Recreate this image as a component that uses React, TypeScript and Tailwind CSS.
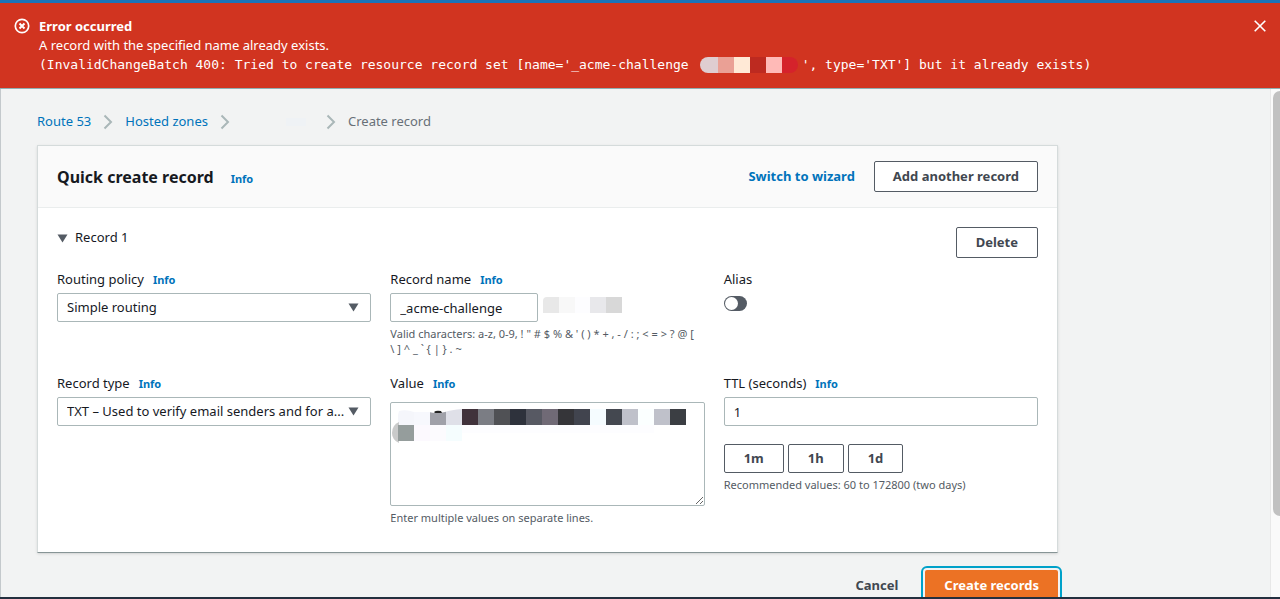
import type { ReactNode } from "react";

const RING =
  "rounded-[2px] border border-[#545b64] bg-white text-[13px] font-bold text-[#414750]";
const FIELD =
  "h-[29px] w-full rounded-[2px] border border-[#aab7b8] bg-white px-[9px] text-[13px] text-[#16191f] outline-none";
const HINT = "text-[11px] leading-[15px] text-[#545b64]";

function Info() {
  return (
    <a href="#info" className="text-[11px] font-bold text-[#0073bb]">
      Info
    </a>
  );
}

function FieldLabel({ htmlFor, info = true, children }: { htmlFor: string; info?: boolean; children: ReactNode }) {
  return (
    <div className="flex h-5 items-center gap-[9px] text-[13px] text-[#16191f]">
      <label htmlFor={htmlFor}>{children}</label>
      {info && <Info />}
    </div>
  );
}

function SelectField({ id, value }: { id: string; value: string }) {
  return (
    <div className="relative mt-[3px]">
      <select id={id} className={`${FIELD} appearance-none truncate pr-6`}>
        <option>{value}</option>
      </select>
      <svg className="pointer-events-none absolute top-[10px] right-3 h-[9px] w-[11px]" viewBox="0 0 11 9">
        <path d="M0.5 0.5H10.5L5.5 8.5Z" fill="#545b64" />
      </svg>
    </div>
  );
}

function Separator() {
  return (
    <svg className="h-4 w-[10px]" viewBox="0 0 10 16" fill="none" stroke="#aab7b8" strokeWidth="2">
      <path d="M1.5 1.5L8 8L1.5 14.5" />
    </svg>
  );
}

function ValueMask() {
  const first = [
    "#f5f6fb", "#f7f8fd", "#a0a1a9", "#dfe0e8", "#40323b", "#7b7d84", "#505155", "#2e323c",
    "#575963", "#706a76", "#353539", "#41444e", "#f5fcff", "#444850", "#bfc1ca", "#fbffff", "#bfc1ca", "#3b3e43",
  ];
  const second = ["#959d9c", "#fcf9fe", "#fcfbfe", "#f5fdfe"];
  return (
    <svg className="pointer-events-none absolute top-[6px] left-[1px] h-[38px] w-[298px]" viewBox="0 0 298 38">
      {first.map((fill, i) => (
        <rect key={i} x={7 + i * 16} y="1" width="16" height="16" fill={fill} />
      ))}
      <path d="M7 1H71Q60 2 54 4Q45 6 38 4H23Q15 1 8 3L7 7Z" fill="#fff" />
      <path d="M43 4Q45 2 50 3L51 5H44Z" fill="#222" />
      <path d="M8 14Q1 17 1 25Q1 32 8 35Z" fill="#c9caca" />
      {second.map((fill, i) => (
        <rect key={i} x={7 + i * 16} y="17" width="16" height="16" fill={fill} />
      ))}
      <rect x="71" y="17" width="192" height="8" fill="#fdfdff" />
    </svg>
  );
}

export default function App() {
  return (
    <div className="flex h-screen flex-col overflow-hidden border-b-2 border-[#232f3e] bg-[#f2f3f3] font-['Noto_Sans',sans-serif] text-[13px] text-[#16191f]">
      <div className="h-[3px] shrink-0 bg-[#1a73ba]" />
      <div
        role="alert"
        className="flex shrink-0 items-start gap-[9px] border-b border-[#8fb0b3] bg-[#d13420] p-[14px] text-white"
      >
        <svg className="mt-px h-4 w-4 shrink-0" viewBox="0 0 16 16" fill="none" stroke="currentColor" strokeWidth="2">
          <circle cx="8" cy="8" r="6.7" strokeWidth="1.7" />
          <path d="M5.5 5.5L10.5 10.5M10.5 5.5L5.5 10.5" />
        </svg>
        <div className="min-w-0 flex-1 leading-[19px]">
          <p className="font-bold">Error occurred</p>
          <p>A record with the specified name already exists.</p>
          <p className="flex items-center font-['DejaVu_Sans_Mono',monospace] whitespace-pre">
            <span>(InvalidChangeBatch 400: Tried to create resource record set [name=&#39;_acme-challenge</span>
            <span className="mr-1 ml-[11px] flex h-4 overflow-hidden rounded-lg">
              <span className="w-[18px] bg-[#dfcdd1]" />
              <span className="w-4 bg-[#eaa095]" />
              <span className="w-4 bg-[#ffe9d6]" />
              <span className="w-4 bg-[#bd2a20]" />
              <span className="w-4 bg-[#ffbab7]" />
              <span className="w-4 bg-[#d5222b]" />
            </span>
            <span>&#39;, type=&#39;TXT&#39;] but it already exists)</span>
          </p>
        </div>
        <button aria-label="Dismiss" className="mt-[3px] h-3 w-3">
          <svg className="h-3 w-3" viewBox="0 0 12 12" fill="none" stroke="currentColor" strokeWidth="1.6">
            <path d="M0.7 0.7L11.3 11.3M11.3 0.7L0.7 11.3" />
          </svg>
        </button>
      </div>

      <div className="flex min-h-0 flex-1 border-l border-[#c4c9cc]">
        <main className="min-w-0 flex-1 overflow-hidden pt-[23px] pr-9 pl-9">
          <nav aria-label="Breadcrumb" className="flex h-5 items-center gap-3">
            <a href="#route53" className="text-[#0073bb]">Route 53</a>
            <Separator />
            <a href="#zones" className="text-[#0073bb]">Hosted zones</a>
            <Separator />
            <span className="flex w-[72px] justify-end pr-2">
              <span className="h-2 w-5 bg-[#eff2f5]" />
            </span>
            <Separator />
            <span className="text-[#687078]">Create record</span>
          </nav>

          <section className="mt-[13px] max-w-[1021px] border border-[#d5dbdb] border-b-[#879596] bg-white shadow-sm">
            <header className="flex h-[62px] items-center justify-between border-b border-[#eaeded] bg-[#fafafa] px-[19px]">
              <div className="flex items-baseline gap-[17px]">
                <h1 className="text-base font-bold">Quick create record</h1>
                <Info />
              </div>
              <div className="flex items-center gap-[19px]">
                <a href="#wizard" className="text-[13px] font-bold text-[#0073bb]">Switch to wizard</a>
                <button className={`${RING} h-[31px] px-[18px]`}>Add another record</button>
              </div>
            </header>

            <div className="px-[19px] pt-[19px] pb-[27px]">
              <div className="flex items-start justify-between">
                <button aria-expanded="true" className="flex h-[22px] items-center gap-[7px]">
                  <svg className="h-[9px] w-[11px]" viewBox="0 0 11 9">
                    <path d="M0.5 0.5H10.5L5.5 8.5Z" fill="#545b64" />
                  </svg>
                  Record 1
                </button>
                <button className={`${RING} h-[31px] px-[19px]`}>Delete</button>
              </div>

              <div className="mt-3 grid grid-cols-3 gap-x-[19px] gap-y-[18px]">
                <div>
                  <FieldLabel htmlFor="policy">Routing policy</FieldLabel>
                  <SelectField id="policy" value="Simple routing" />
                </div>
                <div>
                  <FieldLabel htmlFor="name">Record name</FieldLabel>
                  <div className="mt-[3px] flex items-center gap-[5px]">
                    <div className="w-[148px]">
                      <input id="name" className={FIELD} defaultValue="_acme-challenge" />
                    </div>
                    <div className="mb-[6px] flex h-4 overflow-hidden rounded-tl">
                      <span className="w-4 bg-[#e8e8e8]" />
                      <span className="w-4 bg-[#f8f8f8]" />
                      <span className="w-[15px] bg-[#fdfdff]" />
                      <span className="w-4 bg-[#e8e8eb]" />
                      <span className="w-4 bg-[#d8d8d8]" />
                    </div>
                  </div>
                  <p className={`${HINT} mt-1`}>
                    Valid characters: a-z, 0-9, ! &quot; # $ % &amp; &#39; ( ) * + , - / : ; &lt; = &gt; ? @ [
                    <br />
                    {"\\ ] ^ _ ` { | } . ~"}
                  </p>
                </div>
                <div>
                  <FieldLabel htmlFor="alias" info={false}>Alias</FieldLabel>
                  <input
                    id="alias"
                    type="checkbox"
                    role="switch"
                    className="mt-[6px] flex h-[15px] w-[23px] appearance-none items-center rounded-full bg-[#545b64] p-px before:h-[13px] before:w-[13px] before:rounded-full before:bg-white before:content-['']"
                  />
                </div>

                <div>
                  <FieldLabel htmlFor="type">Record type</FieldLabel>
                  <SelectField id="type" value="TXT – Used to verify email senders and for a..." />
                </div>
                <div>
                  <FieldLabel htmlFor="value">Value</FieldLabel>
                  <div className="relative mt-2">
                    <textarea
                      id="value"
                      className="block h-[104px] w-full resize rounded-[2px] border border-[#aab7b8] bg-white p-2 outline-none"
                    />
                    <ValueMask />
                  </div>
                  <p className={`${HINT} mt-1`}>Enter multiple values on separate lines.</p>
                </div>
                <div>
                  <FieldLabel htmlFor="ttl">TTL (seconds)</FieldLabel>
                  <div className="mt-[3px]">
                    <input id="ttl" className={FIELD} defaultValue="1" />
                  </div>
                  <div className="mt-[18px] flex gap-1">
                    <button className={`${RING} h-[29px] px-[19px]`}>1m</button>
                    <button className={`${RING} h-[29px] px-[19px]`}>1h</button>
                    <button className={`${RING} h-[29px] px-[19px]`}>1d</button>
                  </div>
                  <p className={`${HINT} mt-1`}>Recommended values: 60 to 172800 (two days)</p>
                </div>
              </div>
            </div>
          </section>

          <div className="mt-[17px] flex max-w-[1021px] items-center justify-end gap-[27px]">
            <button className="text-[13px] font-bold text-[#414750]">Cancel</button>
            <button className="h-[31px] rounded-[2px] bg-[#ec7224] px-[19px] text-[13px] font-bold text-white outline-2 outline-offset-2 outline-[#00a1c9]">
              Create records
            </button>
          </div>
        </main>
        <div className="flex w-[10px] shrink-0 flex-col items-end border-l border-[#e8e8e8] bg-[#fafafa] pt-[2px]">
          <div className="h-[84%] w-[7px] rounded-l-full bg-[#c1c1c1]" />
        </div>
      </div>
    </div>
  );
}
